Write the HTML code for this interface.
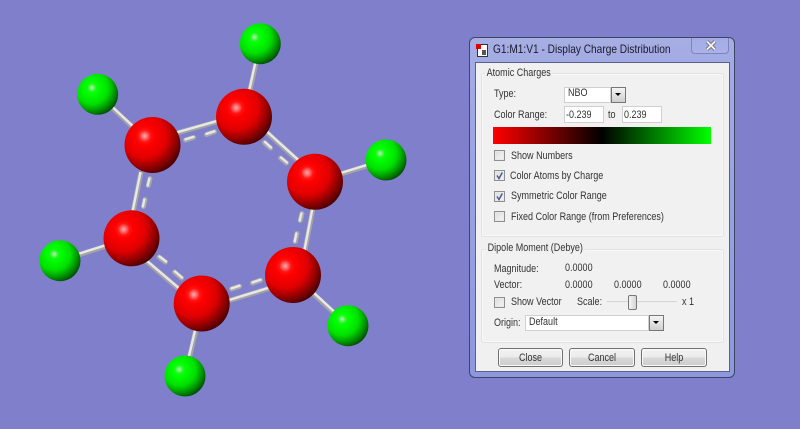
<!DOCTYPE html>
<html>
<head>
<meta charset="utf-8">
<style>
html,body{margin:0;padding:0;}
body{width:800px;height:429px;overflow:hidden;background:#7f7fcc;position:relative;font-family:"Liberation Sans",sans-serif;font-size:10px;color:#222;}
#mol{position:absolute;left:0;top:0;}
#ui{position:absolute;left:0;top:0;width:800px;height:429px;filter:blur(0.35px);}
#ui div{position:absolute;box-sizing:border-box;}
.t{white-space:nowrap;line-height:12px;height:12px;transform:scaleX(.82);transform-origin:0 0;font-size:11px;color:#333;}
.win{left:469px;top:37px;width:266px;height:341px;border-radius:6px;border:1px solid #3d4666;background:linear-gradient(#a6aee2 0,#a2abe4 25px,#8d97dd 100%);}
.client{left:475px;top:62px;width:255px;height:310px;background:#f0f0f0;border:1px solid #5a6088;}
.grp{border:1px solid #e2e2e2;border-radius:3px;background:#f1f1f1;box-shadow:inset 0 0 0 1px #f8f8f8;}
.leg{background:#f0f0f0;padding:0 2px;}
.inp{background:#fff;border:1px solid #d0d0d0;}
.ddb{background:linear-gradient(#f4f4f4,#cfcfcf);border:1px solid #777;}
.ddb:after{content:"";position:absolute;left:3px;top:5px;border-left:3px solid transparent;border-right:3px solid transparent;border-top:3px solid #000;}
.cb{width:11px;height:11px;border:1px solid #8e8f8f;background:linear-gradient(135deg,#dcdcdc,#f6f6f6);box-shadow:inset 0 0 0 1px #e8e8e8;}
.btn{height:19px;top:348px;border:1px solid #707070;border-radius:3px;background:linear-gradient(#f3f3f3 0,#ebebeb 48%,#d8d8d8 52%,#cdcdcd 100%);box-shadow:inset 0 0 0 1px #fafafa;}
.btn span{display:block;text-align:center;line-height:18px;color:#333;font-size:11px;transform:scaleX(.82);}
</style>
</head>
<body>
<svg id="mol" width="460" height="429" viewBox="0 0 460 429">
<defs>
<radialGradient id="r" gradientUnits="objectBoundingBox" cx="0.36" cy="0.34" r="0.76">
<stop offset="0" stop-color="#ffb0b0"/>
<stop offset="0.06" stop-color="#ff7070"/>
<stop offset="0.14" stop-color="#ff1414"/>
<stop offset="0.22" stop-color="#ff0000"/>
<stop offset="0.52" stop-color="#e00000"/>
<stop offset="0.72" stop-color="#980000"/>
<stop offset="0.93" stop-color="#480000"/>
<stop offset="1" stop-color="#400000"/>
</radialGradient>
<radialGradient id="g" gradientUnits="objectBoundingBox" cx="0.36" cy="0.34" r="0.76">
<stop offset="0" stop-color="#b0f0b0"/>
<stop offset="0.06" stop-color="#70f070"/>
<stop offset="0.14" stop-color="#14fa14"/>
<stop offset="0.22" stop-color="#00ff00"/>
<stop offset="0.52" stop-color="#00e000"/>
<stop offset="0.72" stop-color="#009c00"/>
<stop offset="0.93" stop-color="#004c00"/>
<stop offset="1" stop-color="#004400"/>
</radialGradient>
</defs>
<g stroke-linecap="butt">
<g stroke="#a4a4a4" stroke-width="5" fill="none">
<path d="M97.7 94.3L152 145M260.3 43.7L244 117M386 160L315 182M348 325.7L293 275M185 376L202 304M60 260.7L131.5 238"/>
<path d="M152 140L244 114M262 128L305 167M141 172L133 212M313 208L305 250M228 301L270 288M146 261L180 290"/>
</g>
<g stroke="#e8e8e8" stroke-width="2.4" fill="none">
<path d="M97.7 93.3L152 144M259.6 43.7L243.3 117M386 159L315 181M348.7 325L293.7 274.3M184.3 376L201.3 304M60 259.7L131.5 237"/>
<path d="M152 139.4L244 113.4M262.5 127.5L305.5 166.5M140.5 172L132.5 212M312.5 208L304.5 250M228 300.4L270 287.4M146.5 260.5L180.5 289.5"/>
</g>
<g stroke="#a8a8a8" stroke-width="5" stroke-linecap="round" fill="none">
<path d="M185.5 140L193.5 137.5M206.5 134.5L214.5 131.8M264.5 142.5L270.5 148M280.5 158L286.5 163M150 178.5L148.3 185.5M145 199.5L143.5 206.5M302 213.5L300.3 220.5M297 233.5L295.3 241.5M231.5 289L239.5 286.3M252.5 283L260.5 280.3M159 257L165.5 262M174.5 272L181.5 278"/>
</g>
<g stroke="#e8e8e8" stroke-width="2.4" stroke-linecap="round" fill="none">
<path d="M185.5 139.4L193.5 136.9M206.5 133.9L214.5 131.2M265 142L271 147.5M281 157.5L287 162.5M149.4 178.5L147.7 185.5M144.4 199.5L142.9 206.5M301.4 213.5L299.7 220.5M296.4 233.5L294.7 241.5M231.5 288.4L239.5 285.7M252.5 282.4L260.5 279.7M159.5 256.5L166 261.5M175 271.5L182 277.5"/>
</g>
</g>
<circle cx="97.7" cy="94.3" r="20.5" fill="url(#g)"/>
<circle cx="260.3" cy="43.7" r="20.5" fill="url(#g)"/>
<circle cx="386" cy="160" r="20.5" fill="url(#g)"/>
<circle cx="348" cy="325.7" r="20.5" fill="url(#g)"/>
<circle cx="185" cy="376" r="20.5" fill="url(#g)"/>
<circle cx="60" cy="260.7" r="20.5" fill="url(#g)"/>
<circle cx="152.5" cy="145" r="28" fill="url(#r)"/>
<circle cx="244" cy="116.7" r="28" fill="url(#r)"/>
<circle cx="315" cy="181.7" r="28" fill="url(#r)"/>
<circle cx="293" cy="275" r="28" fill="url(#r)"/>
<circle cx="201.7" cy="303.5" r="28" fill="url(#r)"/>
<circle cx="131.5" cy="238.3" r="28" fill="url(#r)"/>
</svg>
<div id="ui">
<div class="win"></div>
<div style="left:691px;top:38px;width:38px;height:16px;border:1px solid #7b84c0;border-top:0;border-radius:0 0 4px 4px;background:linear-gradient(#a3ace4,#aab2e8);"></div>
<svg style="position:absolute;left:705px;top:40px;" width="12" height="11"><path d="M2 1.5L10 9.5M10 1.5L2 9.5" stroke="#555" stroke-width="3.4" fill="none"/><path d="M2 1.5L10 9.5M10 1.5L2 9.5" stroke="#f2f2f2" stroke-width="2" fill="none"/></svg>
<div style="left:477px;top:44px;width:11px;height:13px;background:#fff;border:1px solid #333;"></div>
<div style="left:476px;top:44px;width:5px;height:5px;background:#e00000;"></div>
<div style="left:482px;top:50px;width:4px;height:5px;background:#555;"></div>
<div class="t" style="left:493px;top:43px;font-size:12px;color:#1a1a2a;transform:scaleX(.845);">G1:M1:V1 - Display Charge Distribution</div>
<div class="client"></div>

<div class="grp" style="left:481px;top:73px;width:243px;height:164px;"></div>
<div class="t leg" style="left:485px;top:67px;">Atomic Charges</div>
<div class="t" style="left:494px;top:88px;">Type:</div>
<div class="inp" style="left:564px;top:87px;width:47px;height:16px;"></div>
<div class="t" style="left:568px;top:87px;">NBO</div>
<div class="ddb" style="left:611px;top:87px;width:15px;height:16px;"></div>
<div class="t" style="left:494px;top:109px;">Color Range:</div>
<div class="inp" style="left:564px;top:106px;width:40px;height:17px;"></div>
<div class="t" style="left:566px;top:109px;">-0.239</div>
<div class="t" style="left:608px;top:109px;">to</div>
<div class="inp" style="left:622px;top:106px;width:40px;height:17px;"></div>
<div class="t" style="left:624px;top:109px;">0.239</div>
<div style="left:493px;top:127px;width:218px;height:17px;background:linear-gradient(90deg,#ff0000,#000 50%,#00ff00);"></div>

<div class="cb" style="left:494px;top:150px;"></div>
<div class="t" style="left:511px;top:150px;">Show Numbers</div>
<div class="cb" style="left:494px;top:170px;"></div>
<svg style="position:absolute;left:494px;top:170px;" width="11" height="11"><path d="M3 5.5L5 8.5L8.3 2.5" stroke="#4a5a9a" stroke-width="1.5" fill="none"/></svg>
<div class="t" style="left:510px;top:170px;">Color Atoms by Charge</div>
<div class="cb" style="left:494px;top:191px;"></div>
<svg style="position:absolute;left:494px;top:191px;" width="11" height="11"><path d="M3 5.5L5 8.5L8.3 2.5" stroke="#4a5a9a" stroke-width="1.5" fill="none"/></svg>
<div class="t" style="left:511px;top:190px;">Symmetric Color Range</div>
<div class="cb" style="left:494px;top:211px;"></div>
<div class="t" style="left:511px;top:211px;">Fixed Color Range (from Preferences)</div>

<div class="grp" style="left:481px;top:249px;width:243px;height:94px;"></div>
<div class="t leg" style="left:486px;top:242px;">Dipole Moment (Debye)</div>
<div class="t" style="left:494px;top:263px;">Magnitude:</div>
<div class="t" style="left:565px;top:262px;">0.0000</div>
<div class="t" style="left:494px;top:279px;">Vector:</div>
<div class="t" style="left:565px;top:279px;">0.0000</div>
<div class="t" style="left:614px;top:279px;">0.0000</div>
<div class="t" style="left:663px;top:279px;">0.0000</div>
<div class="cb" style="left:494px;top:297px;"></div>
<div class="t" style="left:511px;top:296px;">Show Vector</div>
<div class="t" style="left:577px;top:296px;">Scale:</div>
<div style="left:607px;top:301px;width:70px;height:2px;background:#d6d6d6;border-bottom:1px solid #eee;"></div>
<div style="left:628px;top:295px;width:9px;height:15px;border:1px solid #777;border-radius:2px;background:linear-gradient(90deg,#f5f5f5,#d5d5d5);"></div>
<div class="t" style="left:682px;top:296px;">x 1</div>
<div class="t" style="left:494px;top:317px;">Origin:</div>
<div class="inp" style="left:525px;top:315px;width:124px;height:16px;"></div>
<div class="t" style="left:529px;top:316px;">Default</div>
<div class="ddb" style="left:649px;top:315px;width:15px;height:16px;"></div>

<div class="btn" style="left:498px;width:65px;"><span>Close</span></div>
<div class="btn" style="left:569px;width:66px;"><span>Cancel</span></div>
<div class="btn" style="left:641px;width:66px;"><span>Help</span></div>
</div>
</body>
</html>
